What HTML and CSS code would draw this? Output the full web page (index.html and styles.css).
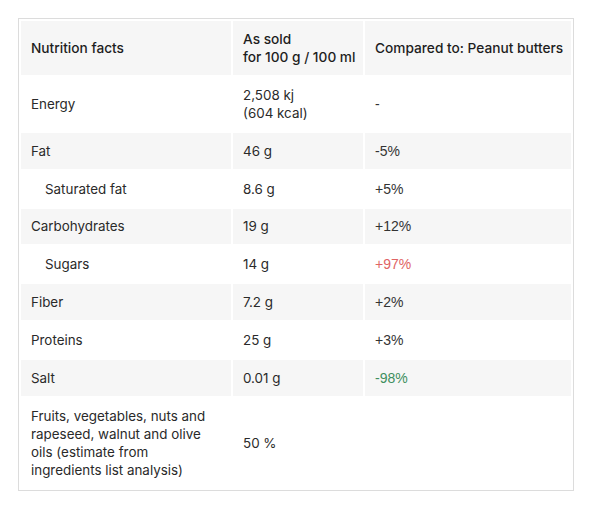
FILE: index.html
```html
<!DOCTYPE html>
<html>
<head>
<meta charset="utf-8">
<link rel="stylesheet" href="styles.css">
</head>
<body>
<div class="page">
  <div class="box">
    <table class="nutri">
      <colgroup>
        <col class="c1"><col class="c2"><col class="c3">
      </colgroup>
      <thead>
        <tr class="shade">
          <th>Nutrition facts</th>
          <th>As sold<br>for 100 g / 100 ml</th>
          <th>Compared to: Peanut butters</th>
        </tr>
      </thead>
      <tbody>
        <tr>
          <td>Energy</td>
          <td>2,508 kj<br>(604 kcal)</td>
          <td class="cmp">-</td>
        </tr>
        <tr class="shade">
          <td>Fat</td>
          <td>46 g</td>
          <td class="cmp">-5%</td>
        </tr>
        <tr>
          <td class="sub">Saturated fat</td>
          <td>8.6 g</td>
          <td class="cmp">+5%</td>
        </tr>
        <tr class="shade">
          <td>Carbohydrates</td>
          <td>19 g</td>
          <td class="cmp">+12%</td>
        </tr>
        <tr>
          <td class="sub">Sugars</td>
          <td>14 g</td>
          <td class="cmp bad">+97%</td>
        </tr>
        <tr class="shade">
          <td>Fiber</td>
          <td>7.2 g</td>
          <td class="cmp">+2%</td>
        </tr>
        <tr>
          <td>Proteins</td>
          <td>25 g</td>
          <td class="cmp">+3%</td>
        </tr>
        <tr class="shade">
          <td>Salt</td>
          <td>0.01 g</td>
          <td class="cmp good">-98%</td>
        </tr>
        <tr>
          <td>Fruits, vegetables, nuts and rapeseed, walnut and olive oils (estimate from ingredients list analysis)</td>
          <td>50 %</td>
          <td></td>
        </tr>
      </tbody>
    </table>
  </div>
</div>
</body>
</html>
```
FILE: styles.css
```css
html, body {
  margin: 0;
  padding: 0;
  background: #ffffff;
}
.page {
  padding: 18px;
}
.box {
  width: 554px;
  border: 1px solid #dcdcdc;
}
.nutri {
  width: 554px;
  table-layout: fixed;
  border-collapse: separate;
  border-spacing: 2px;
  font-family: Inter, "Liberation Sans", sans-serif;
  font-size: 13.4px;
  line-height: 18px;
  color: #2a2a2a;
}
.c1 { width: 210px; }
.c2 { width: 130px; }
.c3 { width: 206px; }
.nutri th,
.nutri td {
  text-align: left;
  vertical-align: middle;
  padding: 8.95px 10px;
}
.nutri th {
  font-size: 13.7px;
  font-weight: 500;
  white-space: nowrap;
  color: #1e1e1e;
}
.shade th,
.shade td {
  background: #f6f6f6;
}
.nutri td.sub {
  padding-left: 24px;
}
.cmp {
  font-family: "Liberation Sans", Arial, sans-serif;
  font-size: 14px;
  color: #333333;
}
.bad { color: #e06464; }
.good { color: #3f8f5e; }
```
